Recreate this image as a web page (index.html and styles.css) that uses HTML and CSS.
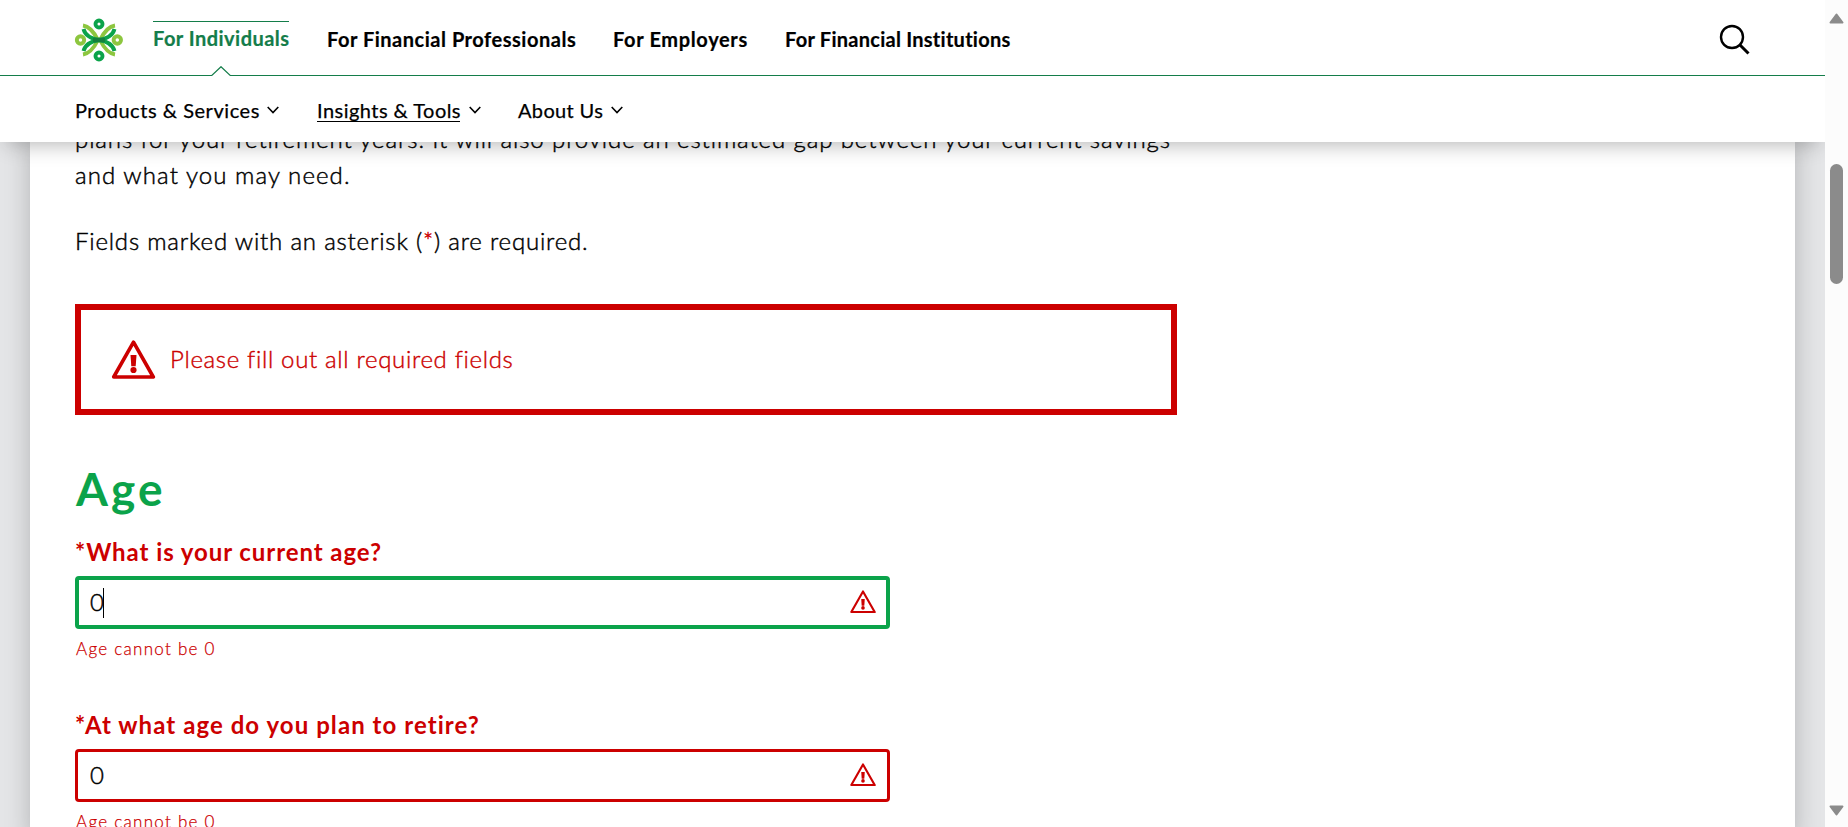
FILE: index.html
```html
<!DOCTYPE html>
<html lang="en">
<head>
<meta charset="utf-8">
<title>Retirement calculator</title>
<link rel="stylesheet" href="styles.css">
</head>
<body>
<svg class="defs" aria-hidden="true">
  <symbol id="warning" viewBox="0 0 44 40">
    <path d="M22 2.200 41.800 37H2.200Z" fill="none" stroke="currentColor" stroke-width="3.600" stroke-linejoin="round"/>
    <path d="M19 15h6l-.8 11.200h-4.400z" fill="currentColor"/>
    <circle cx="22" cy="30" r="3.100" fill="currentColor"/>
  </symbol>
  <symbol id="chevron" viewBox="0 0 12 8">
    <path d="M.7 1 6 6.500 11.300 1" fill="none" stroke="currentColor" stroke-width="1.600"/>
  </symbol>
</svg>
<div class="viewport">
  <div class="page">
    <header class="header">
      <div class="top">
        <svg class="logo" viewBox="0 0 50 46">
          <g fill="none" stroke-width="3.900">
            <g stroke="#8dc63f">
              <path d="M9 8.500C16 9.500 20 15 24 23 20 31 16 36.500 9 37.500"/>
              <path d="M41 8.500C34 9.500 30 15 26 23 30 31 34 36.500 41 37.500"/>
              <circle cx="6.500" cy="23" r="3.700"/><circle cx="43.300" cy="23" r="3.700"/>
            </g>
            <g stroke="#0ba34a">
              <path d="M9.500 12C11 18 16 21.500 25 23 16 24.500 11 28 9.500 34"/>
              <path d="M40.500 12C39 18 34 21.500 25 23 34 24.500 39 28 40.500 34"/>
              <circle cx="25" cy="7" r="3.500"/><circle cx="25" cy="39" r="3.500"/>
            </g>
            <path d="M19 23h12" stroke="#14803f" stroke-width="4.500"/>
          </g>
        </svg>
        <nav class="audience">
          <a class="current">For Individuals</a>
          <a class="pros">For Financial Professionals</a>
          <a class="employers">For Employers</a>
          <a class="inst">For Financial Institutions</a>
        </nav>
        <svg class="search" viewBox="0 0 32 32"><circle cx="13" cy="13" r="11" fill="none" stroke="#000" stroke-width="2.400"/><path d="m21 21 8.500 8.500" stroke="#000" stroke-width="3"/></svg>
        <svg class="pointer" viewBox="0 0 20 11"><path d="M0 9.500 10 0l10 9.500V11H0Z" fill="#fff"/><path d="M0 9.500h.8L10 .7l9.200 8.800h.8" fill="none" stroke="#147d4a" stroke-width="1.200"/></svg>
      </div>
      <nav class="sections">
        <a class="products"><span>Products &amp; Services</span><svg><use href="#chevron"/></svg></a>
        <a class="insights"><span>Insights &amp; Tools</span><svg><use href="#chevron"/></svg></a>
        <a class="about"><span>About Us</span><svg><use href="#chevron"/></svg></a>
      </nav>
    </header>
    <main class="card">
      <p class="intro"><span class="line1">plans for your retirement years. It will also provide an estimated gap between your current savings</span><br><span class="line2">and what you may need.</span></p>
      <p class="note">Fields marked with an asterisk (<b>*</b>) are required.</p>
      <div class="alert"><svg><use href="#warning"/></svg><span>Please fill out all required fields</span></div>
      <h2>Age</h2>
      <div class="field">
        <label class="l1">*What is your current age?</label>
        <div class="input focused"><span>0</span><i></i><svg><use href="#warning"/></svg></div>
        <p class="error">Age cannot be 0</p>
      </div>
      <div class="field">
        <label class="l2">*At what age do you plan to retire?</label>
        <div class="input"><span>0</span><svg><use href="#warning"/></svg></div>
        <p class="error">Age cannot be 0</p>
      </div>
    </main>
  </div>
  <div class="scrollbar">
    <svg class="up" viewBox="0 0 15 11"><path d="M7.500 1.500 13.500 9.500h-12Z" fill="#8b8b8b" stroke="#8b8b8b" stroke-width="2" stroke-linejoin="round"/></svg>
    <div class="thumb"></div>
    <svg class="down" viewBox="0 0 15 11"><path d="M7.500 9.500 13.500 1.500h-12Z" fill="#8b8b8b" stroke="#8b8b8b" stroke-width="2" stroke-linejoin="round"/></svg>
  </div>
</div>
</body>
</html>
```
FILE: styles.css
```css
* { box-sizing: border-box; }
body { margin: 0; overflow: hidden; font-family: Lato, "Open Sans", sans-serif; color: #000; background: #fff; }
p, h2 { margin: 0; }
.defs { display: none; }
.viewport { display: flex; height: 827px; overflow: hidden; }
.page { width: 1825px; height: 827px; background: #e4e5e7; overflow: hidden; }

.header { position: relative; z-index: 2; height: 142px; background: #fff; box-shadow: 0 10px 20px -8px rgba(0, 0, 0, .3); }
.top { position: relative; display: flex; height: 76px; padding-left: 74px; border-bottom: 1px solid #147d4a; }
.logo { width: 50px; height: 46px; margin-top: 17px; }
.audience { display: flex; margin-left: 29px; font-size: 20px; font-weight: 700; line-height: 24px; white-space: nowrap; -webkit-text-stroke: .2px; }
.audience a { margin-top: 27px; }
.audience .current { width: 136px; height: 25px; margin-top: 21px; padding-top: 4px; border-top: 1px solid #147d4a; color: #147d4a; letter-spacing: .47px; }
.pros { width: 249px; margin-left: 38px; letter-spacing: .52px; }
.employers { width: 134px; margin-left: 37px; letter-spacing: .65px; }
.inst { margin-left: 38px; letter-spacing: .26px; }
.search { width: 32px; height: 32px; margin: 24px 74px 0 auto; }
.pointer { position: absolute; left: 211px; top: 66px; width: 20px; height: 11px; }
.sections { display: flex; padding: 21px 0 0 75px; font-size: 20px; line-height: 26px; white-space: nowrap; -webkit-text-stroke: .25px; }
.sections a { display: flex; }
.sections span { height: 25px; }
.sections svg { width: 12px; height: 8px; margin: 9px 0 0 9px; }
.products span { width: 183px; letter-spacing: .54px; }
.insights { margin-left: 38px; }
.insights span { width: 143px; border-bottom: 1px solid #000; letter-spacing: .46px; }
.about { margin-left: 37px; }
.about span { width: 84px; letter-spacing: .35px; }

.card { width: 1765px; height: 700px; margin-left: 30px; padding-left: 45px; background: #fff; box-shadow: 0 0 24px rgba(0, 0, 0, .22); white-space: nowrap; overflow: hidden; }
.intro, .note { font-size: 24px; font-weight: 300; line-height: 36px; -webkit-text-stroke: .45px; }
.intro { margin-top: -21px; }
.line1 { letter-spacing: .9px; }
.line2 { letter-spacing: 1.08px; }
.note { margin-top: 30px; letter-spacing: .81px; }
.note b { color: #c00; font-weight: 300; }
.alert { display: flex; align-items: center; width: 1102px; height: 111px; margin-top: 45px; padding-left: 30px; border: 6px solid #c00; color: #c00; font-size: 24px; font-weight: 300; }
.alert svg { width: 45px; height: 40px; margin-right: 14px; }
.alert span { margin-top: -2px; letter-spacing: .67px; -webkit-text-stroke: .4px; }
h2 { height: 60px; margin: 44px 0 0 1px; color: #0ba34a; font-size: 46px; font-weight: 700; line-height: 60px; letter-spacing: 3.1px; }
.field { height: 173px; margin-top: 17px; color: #c00; }
.field + .field { margin-top: 0; }
.field label { display: block; height: 40px; font-size: 24px; font-weight: 700; line-height: 31px; }
.l1 { letter-spacing: .93px; }
.l2 { letter-spacing: 1.06px; }
.input { display: flex; align-items: center; width: 815px; height: 53px; padding: 0 11px 0 12px; border: 3px solid #c00; border-radius: 4px; color: #000; font-size: 24px; font-weight: 300; }
.input span { width: 13px; margin-top: -2px; -webkit-text-stroke: .45px; }
.input.focused { padding: 0 10px 0 11px; border: 4px solid #0ba34a; }
.input i { width: 1px; height: 30px; background: #000; }
.input svg { width: 26px; height: 24px; margin: -2px 0 0 auto; color: #c00; }
.error { margin: 8px 0 0 1px; font-size: 17px; font-weight: 300; line-height: 24px; letter-spacing: 1.27px; -webkit-text-stroke: .25px; }

.scrollbar { width: 23px; height: 827px; background: #fcfcfc; display: flex; flex-direction: column; align-items: center; padding: 13px 0 11px; }
.scrollbar svg { width: 15px; height: 11px; }
.thumb { width: 13px; height: 120px; margin-top: 140px; border-radius: 7px; background: #8b8b8b; }
.down { margin-top: auto; }
```
